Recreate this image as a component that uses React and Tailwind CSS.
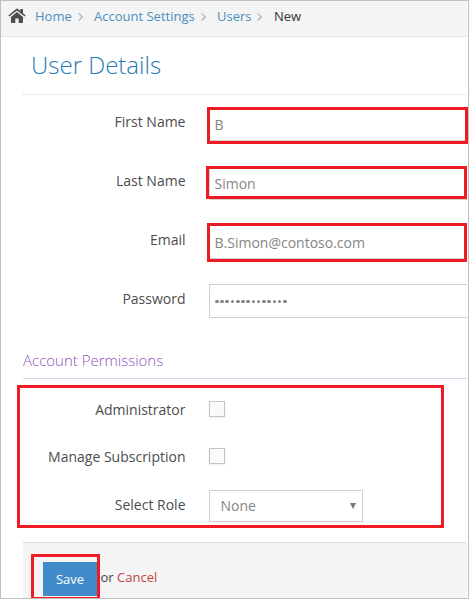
import React from "react";

function HomeIcon() {
  return (
    <svg className="block h-4 w-[18px]" viewBox="0 0 18 16" fill="#4d4d4d">
      <path d="M9 3.9 3 8.9V14.2Q3 15 3.8 15H7.3V10.6H10.7V15H14.2Q15 15 15 14.2V8.9Z" />
      <path d="M8.1.9Q9 .3 9.9.9L12.4 3V1.1H15V5.2L17.6 7.4 16.7 8.4 9 2.4 1.3 8.4.4 7.4Z" />
    </svg>
  );
}

function Chevron() {
  return (
    <svg className="block h-2 w-[5px]" viewBox="0 0 5 8" fill="none" stroke="#b7bbc8" strokeWidth="1.5">
      <path d="M.7.5 4.1 4 .7 7.5" />
    </svg>
  );
}

function Highlight({ className }) {
  return <div className={`pointer-events-none absolute border-[3px] border-[#ed1c24] ${className}`} />;
}

function Label({ children, className = "" }) {
  return <span className={`w-[186px] shrink-0 pr-[0.5px] text-right leading-5 text-[#4c4c4c] ${className}`}>{children}</span>;
}

function Field({ label, children }) {
  return (
    <div className="mb-[25px] flex h-[34px]">
      <Label className="mt-[5px]">{label}</Label>
      <div className="ml-[23px] flex h-[34px] flex-1 items-center border border-r-0 border-[#d0d0d0] pt-[2px] pl-[4.5px] text-[#858585]">
        {children}
      </div>
    </div>
  );
}

function Checkbox() {
  return <span className="ml-[23px] size-4 border border-[#c4c4c4] bg-[#fafafa] shadow-[0_1px_2px_rgba(0,0,0,0.08)]" />;
}

export default function App() {
  return (
    <div className="relative h-[599px] w-[469px] overflow-hidden bg-white font-['Open_Sans',sans-serif] text-sm whitespace-nowrap">
      <header className="mr-[2px] flex h-[37px] items-center border-b border-[#e2e2e2] bg-[#f4f4f4] pb-[3px] text-[13px] text-[#4c8fbd]">
        <div className="mb-px ml-2"><HomeIcon /></div>
        <span className="ml-[9px] w-[37px]">Home</span>
        <div className="ml-[6px]"><Chevron /></div>
        <span className="ml-[11px] w-[101px]">Account Settings</span>
        <div className="ml-[6px]"><Chevron /></div>
        <span className="ml-[11px] w-[35px]">Users</span>
        <div className="ml-[5px]"><Chevron /></div>
        <span className="ml-[12px] text-[#333333]">New</span>
      </header>

      <h1 className="mr-[2px] ml-[23px] h-[58px] border-b border-dotted border-[#d9d9d9] pt-[12px] pl-2 text-2xl leading-8 font-light text-[#2679b5]">
        User Details
      </h1>

      <div className="mr-[2px] pt-3">
        <Field label="First Name">B</Field>
        <Field label="Last Name">Simon</Field>
        <Field label="Email">B.Simon@contoso.com</Field>
        <Field label="Password">
          <div className="mb-px ml-[0.5px] flex gap-[1.65px]">
            {Array.from({ length: 14 }, (_, i) => (
              <span key={i} className="size-[3.6px] rounded-full bg-[#858585]" />
            ))}
          </div>
        </Field>
      </div>

      <h2 className="mr-[2px] ml-[23px] h-[36px] border-b border-[#dcd0ea] pt-[7px] text-[15px] leading-5 font-light text-[#9150bd]">
        Account Permissions
      </h2>

      <div className="mr-[2px] h-[163px] pt-[22px]">
        <div className="flex h-[47px]">
          <Label className="-mt-px">Administrator</Label>
          <Checkbox />
        </div>
        <div className="flex h-[42px]">
          <Label className="-mt-px">Manage Subscription</Label>
          <Checkbox />
        </div>
        <div className="flex h-8">
          <Label className="mt-[5px]">Select Role</Label>
          <div className="ml-[23px] flex w-[154px] items-center justify-between border border-[#d0d0d0] pr-[6px] pl-[10.5px] text-[#858585]">
            None
            <svg className="block h-[6px] w-[6px]" viewBox="0 0 6 6" fill="#777777">
              <path d="M0 0H6L3 6Z" />
            </svg>
          </div>
        </div>
      </div>

      <footer className="mr-[2px] ml-[23px] flex h-[57px] border-t border-[#e2e2e2] bg-[#f4f4f4] pl-5 text-[13px]">
        <button className="mt-[19px] h-[34px] w-[54px] bg-[#428bca] font-['Open_Sans',sans-serif] text-[13px] text-white">
          Save
        </button>
        <span className="mt-6 ml-[3.5px] leading-5 text-[#444444]">
          or <span className="text-[#c04343]">Cancel</span>
        </span>
      </footer>

      <Highlight className="top-[107px] left-[207px] h-[37px] w-[261px]" />
      <Highlight className="top-[166px] left-[206px] h-[33px] w-[261px]" />
      <Highlight className="top-[223px] left-[207px] h-[39px] w-[260px]" />
      <Highlight className="top-[385px] left-[17px] h-[143px] w-[427px]" />
      <Highlight className="top-[554px] left-[31px] h-[46px] w-[69px]" />
      <div className="pointer-events-none absolute inset-0 border border-[#bfbfbf]" />
    </div>
  );
}
